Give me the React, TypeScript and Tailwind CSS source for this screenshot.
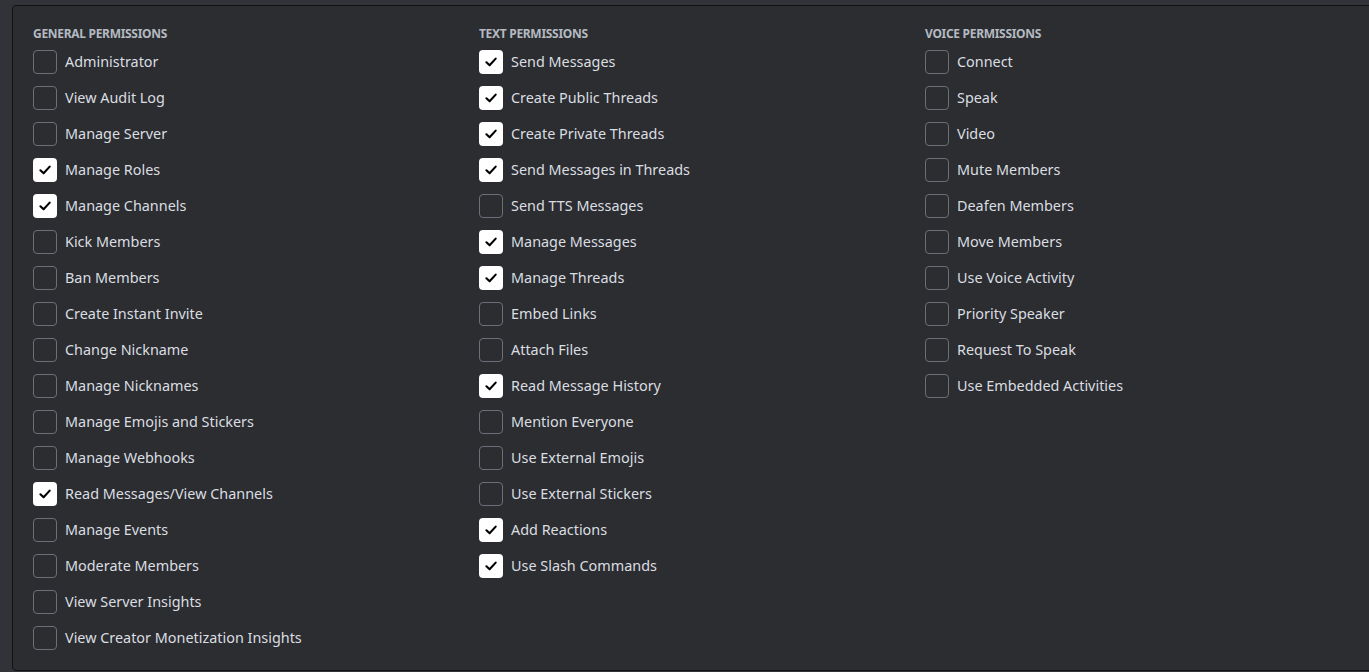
import React from "react";

type P = [string, boolean];

const general: P[] = [
  ["Administrator", false],
  ["View Audit Log", false],
  ["Manage Server", false],
  ["Manage Roles", true],
  ["Manage Channels", true],
  ["Kick Members", false],
  ["Ban Members", false],
  ["Create Instant Invite", false],
  ["Change Nickname", false],
  ["Manage Nicknames", false],
  ["Manage Emojis and Stickers", false],
  ["Manage Webhooks", false],
  ["Read Messages/View Channels", true],
  ["Manage Events", false],
  ["Moderate Members", false],
  ["View Server Insights", false],
  ["View Creator Monetization Insights", false],
];

const text: P[] = [
  ["Send Messages", true],
  ["Create Public Threads", true],
  ["Create Private Threads", true],
  ["Send Messages in Threads", true],
  ["Send TTS Messages", false],
  ["Manage Messages", true],
  ["Manage Threads", true],
  ["Embed Links", false],
  ["Attach Files", false],
  ["Read Message History", true],
  ["Mention Everyone", false],
  ["Use External Emojis", false],
  ["Use External Stickers", false],
  ["Add Reactions", true],
  ["Use Slash Commands", true],
];

const voice: P[] = [
  ["Connect", false],
  ["Speak", false],
  ["Video", false],
  ["Mute Members", false],
  ["Deafen Members", false],
  ["Move Members", false],
  ["Use Voice Activity", false],
  ["Priority Speaker", false],
  ["Request To Speak", false],
  ["Use Embedded Activities", false],
];

function Box({ checked }: { checked: boolean }) {
  if (checked) {
    return (
      <div className="w-6 h-6 shrink-0 rounded-[4px] bg-white flex items-center justify-center">
        <svg width="14" height="14" viewBox="0 0 14 14" fill="none">
          <path d="M2.4 7.3 L5.6 10.3 L11.7 3.6" stroke="#000" strokeWidth="2.1" strokeLinecap="round" strokeLinejoin="round" />
        </svg>
      </div>
    );
  }
  return <div className="w-6 h-6 shrink-0 rounded-[4px] border border-[#6d6f78]" />;
}

function Column({ title, items }: { title: string; items: P[] }) {
  return (
    <div className="w-[446px] shrink-0 flex flex-col">
      <div className="h-4 text-[12px] leading-4 font-bold tracking-[-0.3px] text-[#b5bac1] uppercase mb-2">{title}</div>
      <div className="flex flex-col gap-3">
        {items.map(([name, c]) => (
          <div key={name} className="flex items-center gap-2 h-6">
            <Box checked={c} />
            <span className="text-[14.4px] leading-5 pb-px text-[#dbdee1]">{name}</span>
          </div>
        ))}
      </div>
    </div>
  );
}

export default function App() {
  return (
    <div className="w-[1369px] h-[672px] bg-[#313338] pt-[5px] pl-3 overflow-hidden" style={{ fontFamily: '"Noto Sans", sans-serif' }}>
      <div className="h-[666px] w-[1400px] bg-[#2b2d31] border border-[#111214] rounded-[4px] pl-5 pt-5 flex">
        <Column title="General Permissions" items={general} />
        <Column title="Text Permissions" items={text} />
        <Column title="Voice Permissions" items={voice} />
      </div>
    </div>
  );
}
